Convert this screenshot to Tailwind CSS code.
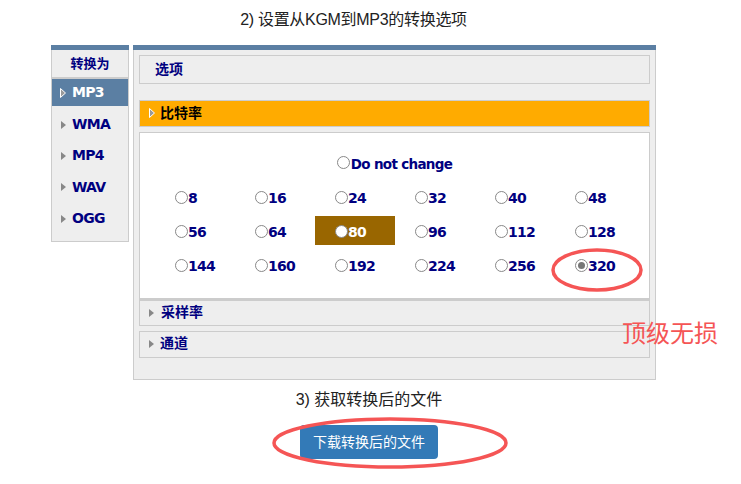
<!DOCTYPE html>
<html lang="zh">
<head>
    <meta charset="UTF-8">
    <title>KGM到MP3</title>
    <script src="https://cdn.jsdelivr.net/npm/@tailwindcss/browser@4"></script>
</head>
<body class="relative w-[741px] h-[484px] overflow-hidden bg-white font-['Liberation_Sans','Noto_Sans_CJK_SC',sans-serif]">

    <div class="w-[605px] ml-[51px]">
        <!-- 标题 -->
        <h2 class="h-[45px] pt-[9px] text-center text-[16px] leading-[22px] tracking-[-0.3px] text-[#222]">2) 设置从KGM到MP3的转换选项</h2>

        <div class="flex items-start gap-[4px]">
            <!-- 左侧格式 -->
            <div class="w-[78px] h-[197px] border border-t-0 border-[#ccc] bg-[#eee] font-['DejaVu_Sans','Noto_Sans_CJK_SC',sans-serif] text-[14px] tracking-[-0.7px] font-bold text-[#000080]">
                <div class="h-[5px] -mx-px bg-[#5b7fa3]"></div>
                <div class="h-[29px] border-2 border-t-0 border-x-0 border-[#ccc] text-center text-[13px] tracking-normal leading-[25px] font-['Noto_Sans_CJK_SC',sans-serif]">转换为</div>
                <div class="flex items-center h-[27px] pl-[8px] bg-[#5b7fa3] text-white">
                    <svg class="w-[6px] h-[10px] mr-[6px]" viewBox="0 0 6 10"><path d="M.5.5 5.5 5 .5 9.5Z" fill="#999" stroke="#fff"/></svg>MP3
                </div>
                <div class="flex items-center h-[31px] mt-[3px] pl-[9px]"><svg class="w-[5px] h-[8px] mr-[6px]" viewBox="0 0 5 8"><path d="M0 0 5 4 0 8Z" fill="#888"/></svg>WMA</div>
                <div class="flex items-center h-[31px] pl-[9px]"><svg class="w-[5px] h-[8px] mr-[6px]" viewBox="0 0 5 8"><path d="M0 0 5 4 0 8Z" fill="#888"/></svg>MP4</div>
                <div class="flex items-center h-[32px] pl-[9px]"><svg class="w-[5px] h-[8px] mr-[6px]" viewBox="0 0 5 8"><path d="M0 0 5 4 0 8Z" fill="#888"/></svg>WAV</div>
                <div class="flex items-center h-[31px] pl-[9px]"><svg class="w-[5px] h-[8px] mr-[6px]" viewBox="0 0 5 8"><path d="M0 0 5 4 0 8Z" fill="#888"/></svg>OGG</div>
            </div>

            <!-- 选项面板 -->
            <div class="w-[523px] h-[335px] border border-t-0 border-[#ccc] bg-[#eee] text-[14px] font-bold text-[#000080] font-['DejaVu_Sans','Noto_Sans_CJK_SC',sans-serif]">
                <div class="h-[5px] -mx-px bg-[#5b7fa3]"></div>
                <div class="px-[5px] pt-[5px]">
                    <div class="h-[29px] pl-[15px] border border-[#ccc] leading-[25px] font-['Noto_Sans_CJK_SC',sans-serif]">选项</div>

                    <div class="flex items-center h-[27px] mt-[16px] pb-[3px] pl-[9px] border border-[#ccc] bg-[#ffab00] text-black font-['Noto_Sans_CJK_SC',sans-serif]">
                        <svg class="w-[6px] h-[10px] mt-[2px] mr-[5px]" viewBox="0 0 6 10"><path d="M.5.5 5.5 5 .5 9.5Z" fill="#999" stroke="#fff"/></svg>比特率
                    </div>

                    <!-- 比特率 -->
                    <div class="h-[167px] mt-[5px] border border-[#ccc] bg-white tracking-[-0.8px]">
                        <div class="flex justify-center items-center h-[22px] mt-[20px] text-[13.5px] tracking-[-0.7px]">
                            <span class="w-[13px] h-[13px] mt-[-3px] mr-[1px] rounded-full border border-[#888] bg-white"></span>Do not change
                        </div>
                        <div class="grid grid-cols-[repeat(6,80px)] auto-rows-[34px] ml-[15px] mt-[7px]">
                            <div class="flex items-center pl-[20px] pb-[2px]"><span class="w-[13px] h-[13px] mt-[-1px] rounded-full border border-[#888] bg-white"></span>8</div>
                            <div class="flex items-center pl-[20px] pb-[2px]"><span class="w-[13px] h-[13px] mt-[-1px] rounded-full border border-[#888] bg-white"></span>16</div>
                            <div class="flex items-center pl-[20px] pb-[2px]"><span class="w-[13px] h-[13px] mt-[-1px] rounded-full border border-[#888] bg-white"></span>24</div>
                            <div class="flex items-center pl-[20px] pb-[2px]"><span class="w-[13px] h-[13px] mt-[-1px] rounded-full border border-[#888] bg-white"></span>32</div>
                            <div class="flex items-center pl-[20px] pb-[2px]"><span class="w-[13px] h-[13px] mt-[-1px] rounded-full border border-[#888] bg-white"></span>40</div>
                            <div class="flex items-center pl-[20px] pb-[2px]"><span class="w-[13px] h-[13px] mt-[-1px] rounded-full border border-[#888] bg-white"></span>48</div>

                            <div class="flex items-center pl-[20px] pb-[2px]"><span class="w-[13px] h-[13px] mt-[-1px] rounded-full border border-[#888] bg-white"></span>56</div>
                            <div class="flex items-center pl-[20px] pb-[2px]"><span class="w-[13px] h-[13px] mt-[-1px] rounded-full border border-[#888] bg-white"></span>64</div>
                            <div class="flex items-center pl-[20px] h-[29px] pt-[3px] bg-[#996600] text-white"><span class="w-[13px] h-[13px] mt-[-1px] rounded-full border border-[#888] bg-white"></span>80</div>
                            <div class="flex items-center pl-[20px] pb-[2px]"><span class="w-[13px] h-[13px] mt-[-1px] rounded-full border border-[#888] bg-white"></span>96</div>
                            <div class="flex items-center pl-[20px] pb-[2px]"><span class="w-[13px] h-[13px] mt-[-1px] rounded-full border border-[#888] bg-white"></span>112</div>
                            <div class="flex items-center pl-[20px] pb-[2px]"><span class="w-[13px] h-[13px] mt-[-1px] rounded-full border border-[#888] bg-white"></span>128</div>

                            <div class="flex items-center pl-[20px] pb-[2px]"><span class="w-[13px] h-[13px] mt-[-1px] rounded-full border border-[#888] bg-white"></span>144</div>
                            <div class="flex items-center pl-[20px] pb-[2px]"><span class="w-[13px] h-[13px] mt-[-1px] rounded-full border border-[#888] bg-white"></span>160</div>
                            <div class="flex items-center pl-[20px] pb-[2px]"><span class="w-[13px] h-[13px] mt-[-1px] rounded-full border border-[#888] bg-white"></span>192</div>
                            <div class="flex items-center pl-[20px] pb-[2px]"><span class="w-[13px] h-[13px] mt-[-1px] rounded-full border border-[#888] bg-white"></span>224</div>
                            <div class="flex items-center pl-[20px] pb-[2px]"><span class="w-[13px] h-[13px] mt-[-1px] rounded-full border border-[#888] bg-white"></span>256</div>
                            <div class="flex items-center pl-[20px] pb-[2px]"><span class="flex items-center justify-center w-[13px] h-[13px] mt-[-1px] rounded-full border border-[#888] bg-white"><span class="w-[7px] h-[7px] rounded-full bg-[#777]"></span></span>320</div>
                        </div>
                    </div>

                    <div class="flex items-center h-[27px] pb-[3px] pl-[9px] border border-t-2 border-[#ccc] font-['Noto_Sans_CJK_SC',sans-serif]">
                        <svg class="w-[5px] h-[8px] mt-[3px] mr-[7px]" viewBox="0 0 5 8"><path d="M0 0 5 4 0 8Z" fill="#888"/></svg>采样率
                    </div>
                    <div class="flex items-center h-[27px] mt-[5px] pb-[4px] pl-[9px] border border-[#ccc] font-['Noto_Sans_CJK_SC',sans-serif]">
                        <svg class="w-[5px] h-[8px] mt-[3px] mr-[6px]" viewBox="0 0 5 8"><path d="M0 0 5 4 0 8Z" fill="#888"/></svg>通道
                    </div>
                </div>
            </div>
        </div>

        <!-- 下载 -->
        <h2 class="mt-[9px] text-center text-[16px] leading-[22px] text-[#222] pl-[31px]">3) 获取转换后的文件</h2>
        <div class="flex justify-center mt-[14px] pl-[31px]">
            <a class="w-[138px] h-[34px] rounded-[4px] bg-[#337ab7] text-center text-[14px] leading-[35px] text-white">下载转换后的文件</a>
        </div>
    </div>

    <!-- 红色标注 -->
    <svg class="absolute left-0 top-0 w-[741px] h-[484px] pointer-events-none" viewBox="0 0 741 484" fill="none" stroke="#f55555" stroke-width="3.5">
        <ellipse cx="597" cy="270" rx="44" ry="20"/>
        <ellipse cx="390" cy="443" rx="116" ry="24"/>
    </svg>
    <div class="absolute left-[622px] top-[316px] text-[24px] leading-[36px] text-[#f55555]">顶级无损</div>
</body>
</html>
